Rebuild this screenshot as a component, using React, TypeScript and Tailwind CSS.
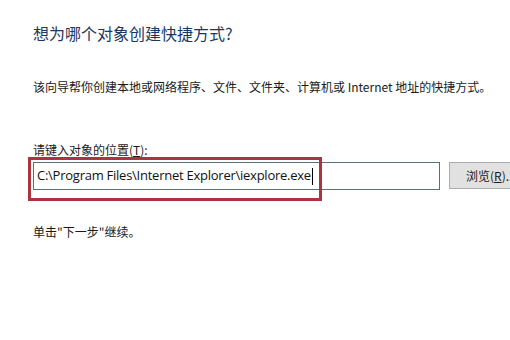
export default function App() {
  const cjk = '"Noto Sans CJK SC", "Noto Sans", sans-serif';
  return (
    <div
      className="w-[510px] h-[340px] overflow-hidden bg-white text-[#1a1a1a]"
      style={{ fontFamily: cjk }}
    >
      <div className="flex flex-col pl-[33px] pt-[23px]">
        <h1 className="text-[16px] leading-[20px] font-normal text-[#1c3760]">
          想为哪个对象创建快捷方式?
        </h1>

        <p className="mt-[36px] text-[12px] leading-[16px] whitespace-nowrap">
          该向导帮你创建本地或网络程序、文件、文件夹、计算机或 Internet 地址的快捷方式。
        </p>

        <label className="mt-[47px] text-[12px] leading-[16px]">
          请键入对象的位置(<span className="underline">T</span>):
        </label>

        <div className="mt-[4px] flex items-start gap-[9px]">
          <div className="relative">
            <div className="w-[407px] h-[28px] border border-[#56707d] bg-white flex items-center pl-[3px]">
              <span className="text-[13px] text-[#111] font-['Open_Sans','Noto_Sans',sans-serif] tracking-[-0.25px]">
                C:\Program Files\Internet Explorer\iexplore.exe
              </span>
              <span className="ml-[1px] w-[1px] h-[17px] bg-black" />
            </div>
            {/* red highlight */}
            <div className="absolute left-[-5px] top-[-5px] w-[294px] h-[44px] border-[3px] border-[#ad3341]" />
          </div>
          <button className="w-[75px] h-[27px] shrink-0 border border-[#adadad] bg-[#e1e1e1] text-[12px] text-left pl-[16px] text-[#1a1a1a]">
            浏览(<span className="underline">R</span>)...
          </button>
        </div>

        <p className="mt-[34px] text-[12px] leading-[16px]">单击"下一步"继续。</p>
      </div>
    </div>
  );
}
